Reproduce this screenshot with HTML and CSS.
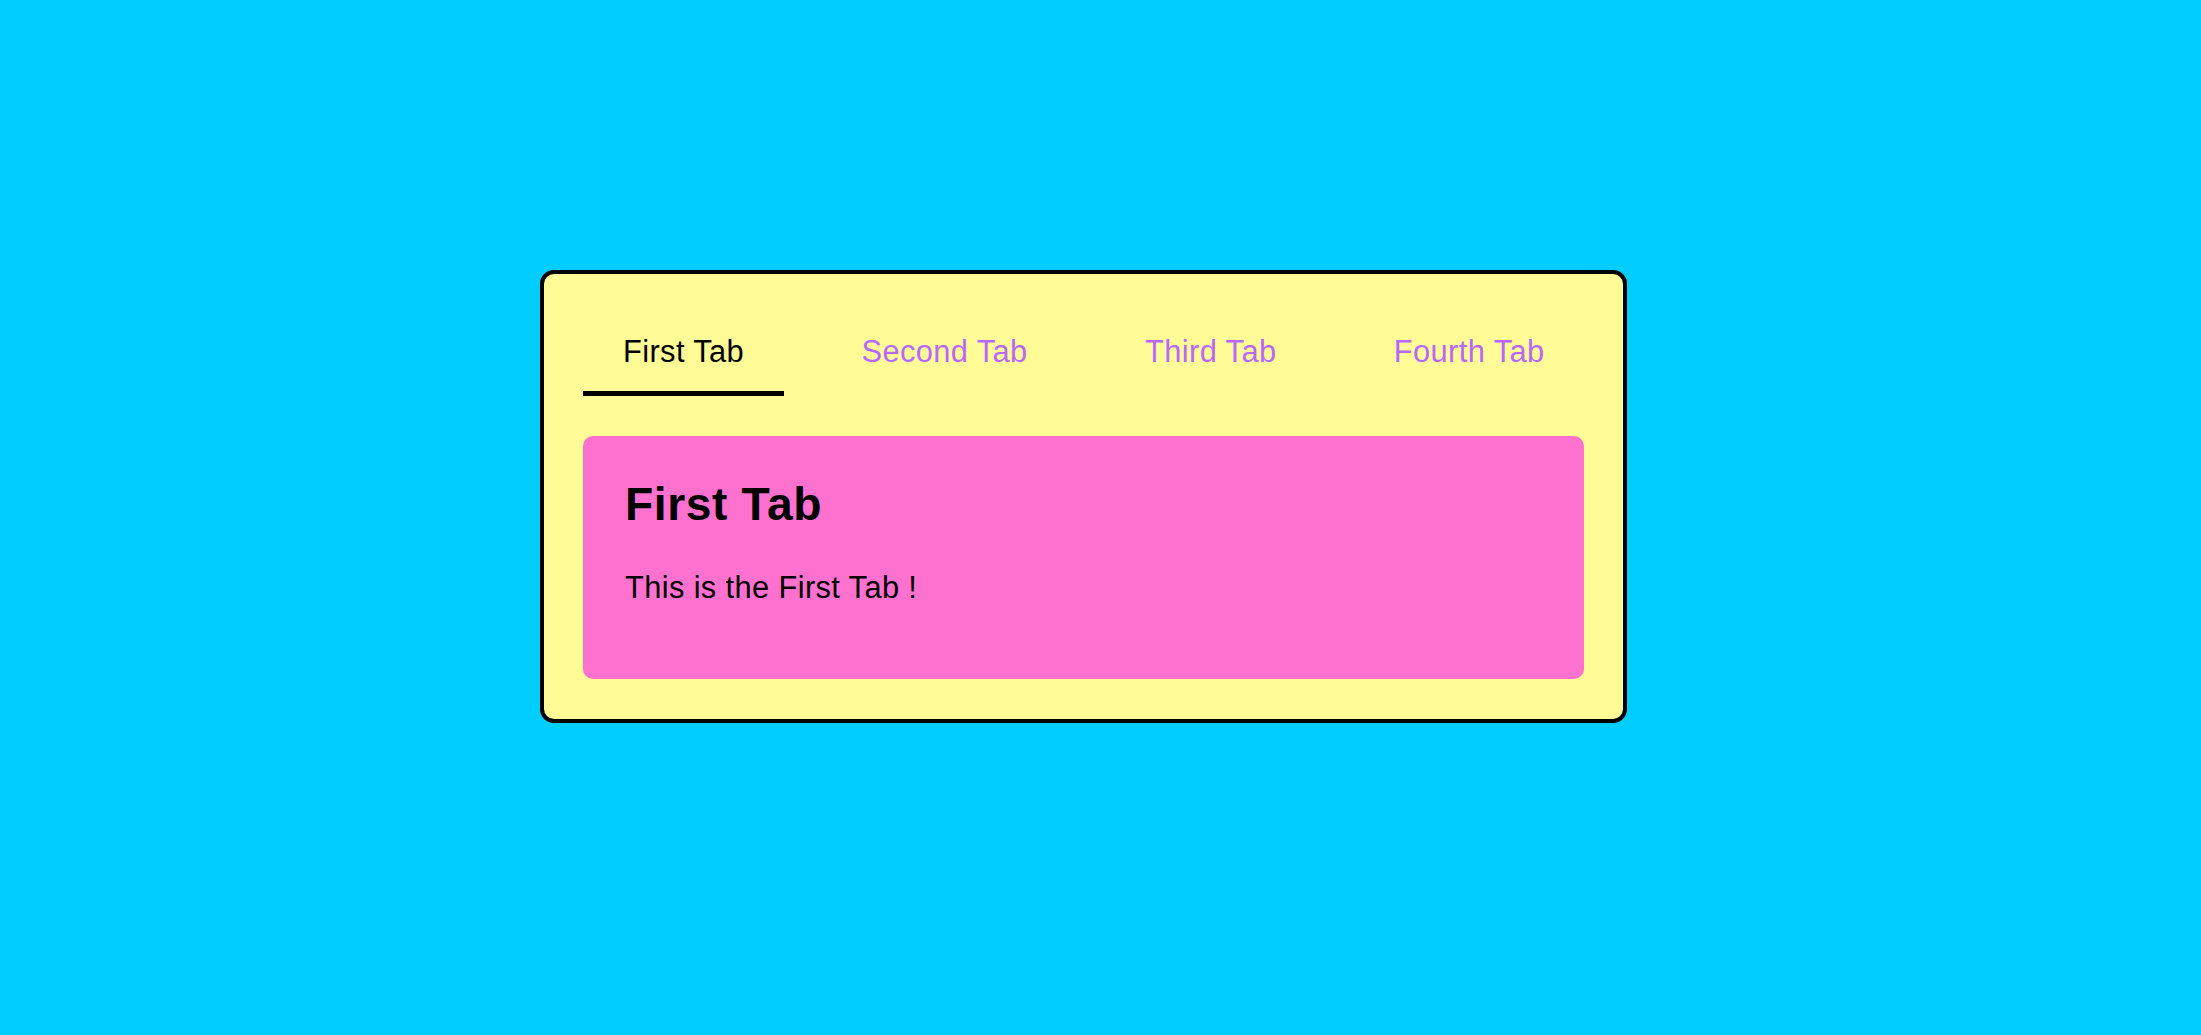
FILE: index.html
```html
<!DOCTYPE html>
<html lang="en">
<head>
<meta charset="utf-8">
<title>Tabs</title>
<link rel="stylesheet" href="styles.css">
</head>
<body>
<div class="page">
  <div class="card">
    <div class="tabs">
      <button class="tab active">First Tab</button>
      <button class="tab">Second Tab</button>
      <button class="tab">Third Tab</button>
      <button class="tab">Fourth Tab</button>
    </div>
    <div class="panel">
      <h2 class="panel-title">First Tab</h2>
      <p class="panel-text">This is the First Tab !</p>
    </div>
  </div>
</div>
</body>
</html>
```
FILE: styles.css
```css
html, body {
  margin: 0;
  padding: 0;
  background: #01cdfe;
}
.page {
  box-sizing: border-box;
  height: 1035px;
  display: flex;
  align-items: center;
  justify-content: center;
  padding-right: 34px;
  padding-bottom: 42px;
  font-family: "Liberation Sans", Arial, sans-serif;
  font-size: 30.8px;
}
.card {
  box-sizing: border-box;
  width: 1087px;
  background: #fffb96;
  border: 4px solid #000;
  border-radius: 14px;
  padding: 40px 39px 40px 39px;
}
.tabs {
  display: flex;
  justify-content: space-between;
}
.tab {
  font-family: inherit;
  font-size: 30.8px;
  letter-spacing: 0.4px;
  line-height: normal;
  background: none;
  border: none;
  border-bottom: 5.6px solid transparent;
  padding: 20px 39.5px 21.6px 40px;
  margin: 0;
  color: #b967ff;
  cursor: pointer;
}
.tab.active {
  color: #000;
  border-bottom-color: #000;
}
.panel {
  margin-top: 40px;
  background: #ff71ce;
  border-radius: 10px;
  padding: 41px 42px 43px;
}
.panel-title {
  margin: 0 0 38.3px;
  font-size: 46.2px;
  letter-spacing: 0.6px;
  font-weight: bold;
  line-height: normal;
}
.panel-text {
  margin: 0 0 30.8px;
  font-size: 30.8px;
  letter-spacing: 0.38px;
  line-height: normal;
}
```
